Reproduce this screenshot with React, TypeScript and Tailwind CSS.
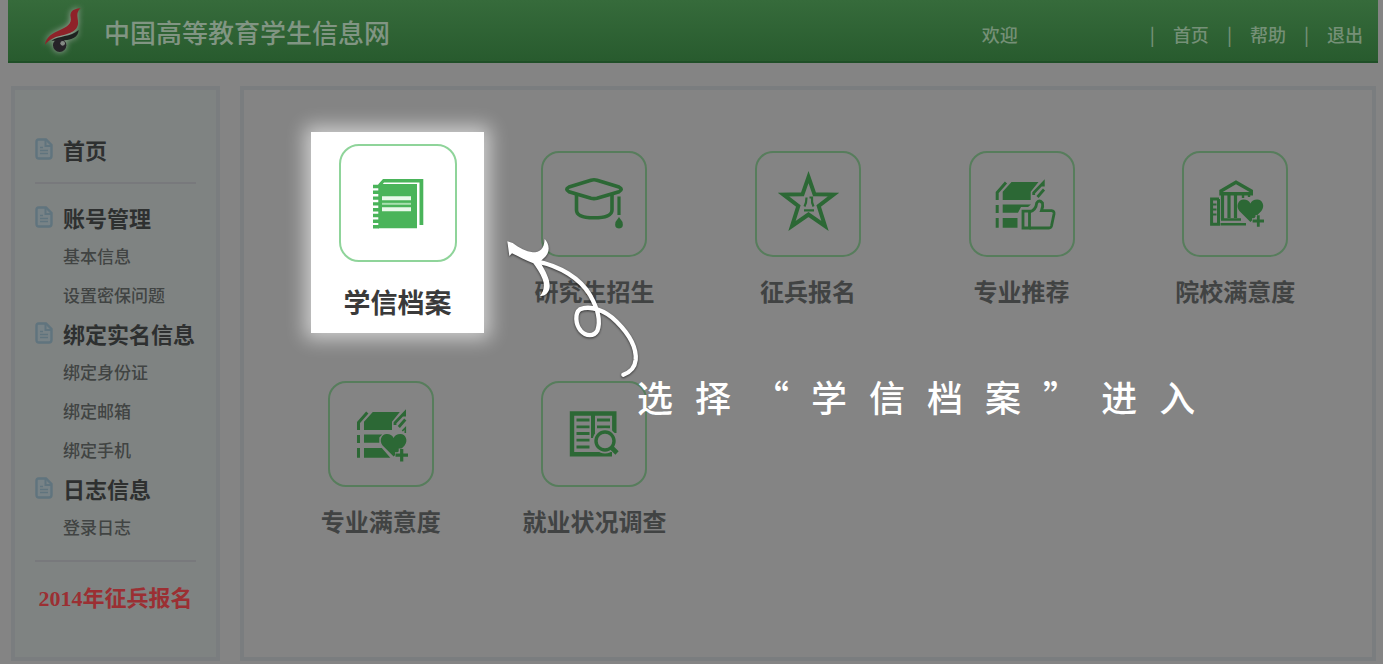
import type { ReactNode } from 'react'

type MenuItem = {
  label: string
  children?: string[]
}

const accountMenu: MenuItem[] = [
  { label: '账号管理', children: ['基本信息', '设置密保问题'] },
  { label: '绑定实名信息', children: ['绑定身份证', '绑定邮箱', '绑定手机'] },
  { label: '日志信息', children: ['登录日志'] },
]

const topLinks = ['首页', '帮助', '退出']

const hint = '选择“学信档案”进入'

const HEART = 'M0 11.5 L-11 0.5 C-15 -4.5 -12 -11 -6.8 -11 C-3.5 -11 -1.2 -9.5 0 -7 C1.2 -9.5 3.5 -11 6.8 -11 C12 -11 15 -4.5 11 0.5 Z'

function Icon({ children }: { children: ReactNode }) {
  return (
    <svg viewBox="0 0 64 64" className="size-16 overflow-visible" fill="none" stroke="currentColor" aria-hidden="true">
      {children}
    </svg>
  )
}

function Logo() {
  return (
    <svg
      viewBox="0 0 120 150"
      className="h-[50px] w-10 overflow-visible drop-shadow-[0_0_3px_#a3aaa3]"
      aria-hidden="true"
    >
      <path
        d="M3 116 C6 92 26 82 48 72 C70 62 84 54 80 34 C77 20 84 8 110 7 C97 18 100 28 102 45 C105 68 88 80 62 86 C36 91 16 98 3 116 Z"
        fill="#8f2229"
      />
      <path d="M22 104 C44 88 80 94 104 72 C103 94 82 102 62 103 C48 104 34 105 22 104 Z" fill="#1e2220" />
      <circle cx="47" cy="118" r="20" fill="#262328" />
      <circle cx="56" cy="112" r="7" fill="#858a85" />
    </svg>
  )
}

function DocIcon() {
  return (
    <svg viewBox="0 0 18 22" className="h-[22px] w-[18px] shrink-0" fill="none" stroke="#60747e" aria-hidden="true">
      <path
        d="M3.5 1.5 H11 L16.5 7 V18 Q16.5 20.5 14 20.5 H4 Q1.5 20.5 1.5 18 V3.5 Q1.5 1.5 3.5 1.5 Z"
        fill="#788387"
        strokeWidth="2.4"
      />
      <path d="M10.5 2 V8 H16" strokeWidth="2" />
      <path d="M5 9.5 H8 M5 12.5 H13 M5 15.5 H13" strokeWidth="1.5" />
    </svg>
  )
}

function NotebookIcon() {
  return (
    <Icon>
      <path d="M12.5 13 L17 8 H57.3 V54 H53.5 V11.5 H18 L16 14 Z" fill="currentColor" stroke="none" />
      <path d="M12.3 13 H51 V57.3 H12.3 Z" fill="currentColor" stroke="none" />
      <path
        d="M7 15.5 H13 M7 21.3 H13 M7 27.1 H13 M7 32.9 H13 M7 38.7 H13 M7 44.5 H13 M7 50.3 H13 M7 55.8 H13"
        strokeWidth="3.4"
      />
      <path d="M16 27.3 H45 M16 38.3 H45" stroke="#e9f8ea" strokeWidth="4" />
      <path d="M16 32.8 H45" stroke="#a9dfb0" strokeWidth="2" />
    </Icon>
  )
}

function CapIcon() {
  return (
    <Icon>
      <path
        d="M7 15 L29 8.2 Q32 7.4 35 8.2 L57 15 Q61.5 17.3 57 19.8 L35 26.2 Q32 27 29 26.2 L7 19.8 Q2.5 17.3 7 15 Z"
        strokeWidth="3.6"
      />
      <path d="M14.5 23 V38 Q14.5 45.8 32 45.8 Q50 45.8 50 38 V23" strokeWidth="3.6" />
      <path d="M57 24.5 V43" strokeWidth="3.2" />
      <path d="M57 45 L60.5 50 Q62 56.5 57 56.5 Q52 56.5 53.5 50 Z" fill="currentColor" stroke="none" />
    </Icon>
  )
}

function StarIcon() {
  return (
    <Icon>
      <path
        d="M32.5 5 L38.5 22.3 L57.5 22.6 L42.7 34 L49 54 L32.5 42.5 L16 54 L22.3 34 L7.5 22.6 L26.5 22.3 Z"
        strokeWidth="4"
      />
      <path d="M30.5 25.5 Q30.5 31 28.5 34.5 M33.5 25.5 H36 Q35.5 31 37.5 34.5 M28 38.3 H38" strokeWidth="2.2" />
    </Icon>
  )
}

function BookStack() {
  return (
    <>
      <path d="M12.7 28 V19.7 L21.5 10 H48.5 L40.7 19.7 V28 Z" fill="currentColor" stroke="none" />
      <path d="M7.2 28 V20.5 L16 10.5" strokeWidth="3" />
      <path d="M7.2 33 V41 M7.2 46 V55.7" strokeWidth="3" />
      <path d="M43.7 23 V20.8 L53.3 10.8 V14.5" strokeWidth="2.8" />
      <path d="M47.5 25 L54 17.5" strokeWidth="2.8" />
    </>
  )
}

function BookThumbIcon() {
  return (
    <Icon>
      <BookStack />
      <path d="M12.7 32.5 H41 L38 35 H31 L28 40.7 H12.7 Z M12.7 46 H27.5 V55.7 H12.7 Z" fill="currentColor" stroke="none" />
      <path d="M33 39.2 H39.5 V56 H33 Z" strokeWidth="2.8" />
      <path
        d="M39.5 40 Q46 38 46.7 31 Q49 27 52.5 31 Q53.3 34 51.5 38.6 H61.5 Q64.5 39 64 42 L61.5 54 Q61 56 59 56 H39.5"
        strokeWidth="2.8"
      />
    </Icon>
  )
}

function BookHeartIcon() {
  return (
    <Icon>
      <g transform="translate(2.3 0)">
        <BookStack />
        <path d="M12.7 32.5 H31 L28 35.5 V40.7 H12.7 Z M12.7 46 H30.5 L39 55.7 H12.7 Z" fill="currentColor" stroke="none" />
        <path d="M51 29 L54 26 V31" strokeWidth="1.6" />
      </g>
      <path d={HEART} transform="translate(44.6 43)" fill="currentColor" stroke="none" />
      <path d="M52.7 46.5 V60 M46 53.2 H59.5" stroke="#848484" strokeWidth="6" />
      <path d="M52.7 47 V59.5 M46.5 53.2 H59" strokeWidth="3.2" />
    </Icon>
  )
}

function CollegeHeartIcon() {
  return (
    <Icon>
      <path d="M18 19 L33 10.3 L48.3 19 V21.8 H18 Z" strokeWidth="3.4" />
      <path d="M19.5 22 V47.5 M26 22 V46 M32.5 22 V46" strokeWidth="3.2" />
      <path d="M40 22 V26 M46 22 V25" strokeWidth="2.4" />
      <path d="M18 47.5 H38 M17.5 52.3 H43" strokeWidth="2.6" />
      <path d="M16 27 H8.6 V52.3 H15.5 V27" strokeWidth="3" />
      <path d="M10 32.5 H13.5 M10 37.5 H13.5 M10 42.5 H13.5" strokeWidth="2" />
      <path d={HEART} transform="translate(47.4 38.6)" fill="currentColor" stroke="none" />
      <path d="M55.3 43 V55.5 M49 49 H62" stroke="#848484" strokeWidth="5.5" />
      <path d="M55.3 43.3 V54.7 M49.6 49 H61" strokeWidth="2.8" />
    </Icon>
  )
}

function SurveyIcon() {
  return (
    <Icon>
      <path d="M52.3 31 V11.5 H10 V52.3 H50" strokeWidth="4.4" />
      <path d="M31 11 V36" strokeWidth="4" />
      <path d="M14.5 18 H27.5 M14.5 24.8 H27.5 M14.5 31.5 H27.5 M14.5 38.2 H27.5 M14.5 45 H27.5" strokeWidth="2.8" />
      <path d="M35 18 H48 M35 24.8 H48" strokeWidth="2.8" />
      <circle cx="43" cy="39" r="12.5" fill="#848484" stroke="none" />
      <circle cx="43" cy="39" r="9" strokeWidth="3.4" />
      <path d="M49 45 L55 51" strokeWidth="4.6" />
    </Icon>
  )
}

const services = [
  { label: '研究生招生', icon: <CapIcon /> },
  { label: '征兵报名', icon: <StarIcon /> },
  { label: '专业推荐', icon: <BookThumbIcon /> },
  { label: '院校满意度', icon: <CollegeHeartIcon /> },
  { label: '专业满意度', icon: <BookHeartIcon /> },
  { label: '就业状况调查', icon: <SurveyIcon /> },
]

function MenuHeading({ label }: { label: string }) {
  return (
    <a href="#" className="flex h-[38px] items-center gap-2.5 text-[22px] font-bold whitespace-nowrap text-[#2e3030]">
      <DocIcon />
      {label}
    </a>
  )
}

function Sidebar() {
  return (
    <aside className="w-[209px] shrink-0 border-4 border-[#7a7d7f] bg-[#7f8382] px-5 pt-10">
      <MenuHeading label="首页" />
      <hr className="my-3.5 border-t-2 border-[#78797c]" />
      <nav>
        {accountMenu.map((item) => (
          <div key={item.label}>
            <MenuHeading label={item.label} />
            {item.children?.map((child) => (
              <a
                key={child}
                href="#"
                className="flex h-[39px] items-center pl-7 text-[17px] font-medium whitespace-nowrap text-[#414443]"
              >
                {child}
              </a>
            ))}
          </div>
        ))}
      </nav>
      <hr className="my-3.5 border-t-2 border-[#78797c]" />
      <a
        href="#"
        className="flex h-[44px] items-center justify-center font-['Liberation_Serif','Noto_Sans_CJK_SC',serif] text-[22px] font-bold whitespace-nowrap text-[#9b2f33]"
      >
        2014年征兵报名
      </a>
    </aside>
  )
}

// Highlighted card plus the hand-drawn arrow and caption that point to it
function GuideStep() {
  return (
    <li className="relative z-10">
      <a
        href="#"
        className="absolute -top-[19px] left-[37px] flex h-[201px] w-[173px] flex-col items-center bg-white pt-3 shadow-[0_0_18px_6px_rgba(255,255,255,0.6)]"
      >
        <span className="flex size-[118px] items-center justify-center rounded-[20px] border-2 border-[#8fd49a] text-[#4ab45a]">
          <NotebookIcon />
        </span>
        <span className="mt-5 text-[27px] leading-10 font-bold text-[#3a3a3a]">学信档案</span>
      </a>
      <svg
        viewBox="48 291 408 426"
        className="pointer-events-none absolute top-[86px] left-[232px] h-[142px] w-[136px] overflow-visible drop-shadow-[0_1px_1px_rgba(0,0,0,0.6)]"
        fill="none"
        stroke="#fff"
        strokeLinecap="round"
        aria-hidden="true"
      >
        <path
          d="M52 304 L68 309 C88 324 108 334 128 337 C150 337 162 328 164 297 C178 312 184 338 158 358 L150 365 C168 395 184 425 178 448 C174 460 164 470 150 468 C160 456 166 438 158 418 C150 398 140 384 130 370 C108 362 86 350 66 340 L58 348 Z"
          fill="#fff"
          stroke="none"
        />
        <path
          d="M140 364 C210 378 270 415 300 465 C320 500 334 540 322 572 C312 590 288 590 272 572 C256 552 254 520 270 508 C300 495 345 510 380 545 C420 585 440 625 437 660 C434 685 422 696 400 704"
          strokeWidth="13"
        />
      </svg>
      <p className="absolute top-[221px] left-[363px] flex gap-[22px] text-4xl leading-12 font-medium text-white">
        {hint.split('').map((char, i) => (
          <span key={i}>{char}</span>
        ))}
      </p>
    </li>
  )
}

export default function App() {
  return (
    <div
      lang="zh-CN"
      className="flex min-h-screen flex-col bg-[#848484] pb-[3px] font-['Noto_Sans_CJK_SC','Liberation_Sans',sans-serif]"
    >
      <header className="mr-[5px] ml-2 flex h-[63px] items-center border-b-2 border-[#1f4f27] bg-linear-to-b from-[#366b3b] to-[#285b2e] pr-[15px] pl-9">
        <Logo />
        <h1 className="ml-5 pt-0.5 text-[26px] leading-9 font-medium text-[#819583]">中国高等教育学生信息网</h1>
        <div className="ml-auto flex items-center gap-[18px] pt-1.5 text-lg font-medium text-[#759077]">
          <span className="mr-[114px]">欢迎</span>
          {topLinks.map((link) => (
            <span key={link} className="flex gap-[18px]">
              <span aria-hidden="true">|</span>
              <a href="#">{link}</a>
            </span>
          ))}
        </div>
      </header>

      <div className="mt-[23px] mr-[7px] ml-[11px] flex flex-1 gap-5">
        <Sidebar />
        <main className="flex-1 border-4 border-[#7a7d7f] px-[30px] pt-[61px] pb-10">
          <ul className="grid grid-cols-5 gap-y-[70px]">
            <GuideStep />
            {services.map((service) => (
              <li key={service.label}>
                <a href="#" className="flex flex-col items-center">
                  <span className="flex size-[106px] items-center justify-center rounded-[18px] border-2 border-[#577d5c] text-[#2c6835]">
                    {service.icon}
                  </span>
                  <span className="mt-4 mb-0.5 text-2xl leading-9 font-bold text-[#414343]">{service.label}</span>
                </a>
              </li>
            ))}
          </ul>
        </main>
      </div>
    </div>
  )
}
